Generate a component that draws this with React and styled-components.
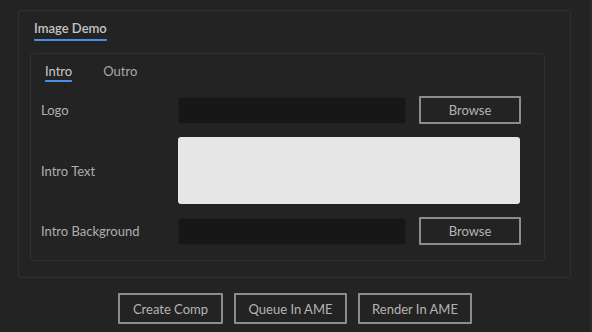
import React from "react";
import styled, { createGlobalStyle } from "styled-components";

const GlobalStyle = createGlobalStyle`
  html, body {
    margin: 0;
    padding: 0;
    background: #232323;
  }
  body {
    width: 592px;
    height: 332px;
    overflow: hidden;
    font-family: Lato, "Open Sans", sans-serif;
    color: #b2b2b2;
  }
`;

function App() {
  return (
    <>
      <GlobalStyle />
      <Page>
        <Panel>
          <TabBar>
            <Tab active>Image Demo</Tab>
          </TabBar>
          <Inner>
            <SubTabs>
              <SubTab active>Intro</SubTab>
              <SubTab>Outro</SubTab>
            </SubTabs>
            <Form>
              <Label>Logo</Label>
              <Field />
              <Button>Browse</Button>
              <Label>Intro Text</Label>
              <TextArea />
              <Label>Intro Background</Label>
              <Field />
              <Button>Browse</Button>
            </Form>
          </Inner>
        </Panel>
        <Actions>
          <ActionButton width={105}>Create Comp</ActionButton>
          <ActionButton width={113}>Queue In AME</ActionButton>
          <ActionButton width={114}>Render In AME</ActionButton>
        </Actions>
        <EdgeStrip />
      </Page>
    </>
  );
}

const Page = styled.div`
  position: relative;
  width: 592px;
  height: 332px;
  padding-top: 10px;
  box-sizing: border-box;
`;

const EdgeStrip = styled.div`
  position: absolute;
  top: 0;
  right: 0;
  width: 2px;
  height: 100%;
  background: #2a2a2a;
`;

const Panel = styled.div`
  margin-left: 18px;
  width: 553px;
  height: 268px;
  box-sizing: border-box;
  border: 1px solid #2f2f2f;
  border-radius: 3px;
  padding: 0 26px 0 11px;
`;

const TabBar = styled.div`
  display: flex;
  height: 42px;
  padding-left: 4px;
`;

const Tab = styled.div`
  margin-top: 8px;
  height: 20px;
  font-size: 13px;
  font-weight: 600;
  line-height: 19px;
  color: #c4c4c4;
  border-bottom: 2px solid ${(p) => (p.active ? "#4b8ee6" : "transparent")};
  border-radius: 1px;
`;

const Inner = styled.div`
  width: 515px;
  height: 208px;
  box-sizing: border-box;
  border: 1px solid #2f2f2f;
  border-radius: 3px;
  padding: 0 10px;
`;

const SubTabs = styled.div`
  display: flex;
  gap: 31px;
  padding-left: 4px;
  height: 42px;
`;

const SubTab = styled.div`
  margin-top: 10px;
  height: 15px;
  font-size: 13px;
  line-height: 15px;
  padding-bottom: 1px;
  color: ${(p) => (p.active ? "#c8c8c8" : "#a8a8a8")};
  border-bottom: 2px solid ${(p) => (p.active ? "#4b8ee6" : "transparent")};
  border-radius: 1px;
`;

const Form = styled.div`
  display: grid;
  grid-template-columns: 124px 228px 102px;
  column-gap: 13px;
  row-gap: 13px;
  align-items: center;
`;

const Label = styled.div`
  font-size: 13px;
  color: #aeaeae;
`;

const Field = styled.div`
  height: 27px;
  background: #171717;
  border: 1px solid #1e1e1e;
  border-radius: 3px;
  box-sizing: border-box;
`;

const TextArea = styled.div`
  grid-column: 2 / 4;
  height: 67px;
  margin-right: 1px;
  background: #e6e6e6;
  border-radius: 3px;
`;

const Button = styled.button`
  width: 102px;
  height: 28px;
  box-sizing: border-box;
  background: #232323;
  border: 2px solid #8c8c8c;
  border-radius: 1px;
  color: #b4b4b4;
  font-family: Lato, "Open Sans", sans-serif;
  font-size: 13px;
  padding: 0;
`;

const Actions = styled.div`
  display: flex;
  justify-content: center;
  gap: 11px;
  margin-top: 15px;
  padding-right: 2px;
`;

const ActionButton = styled(Button)`
  width: ${(p) => p.width}px;
  height: 31px;
`;

export default App;
